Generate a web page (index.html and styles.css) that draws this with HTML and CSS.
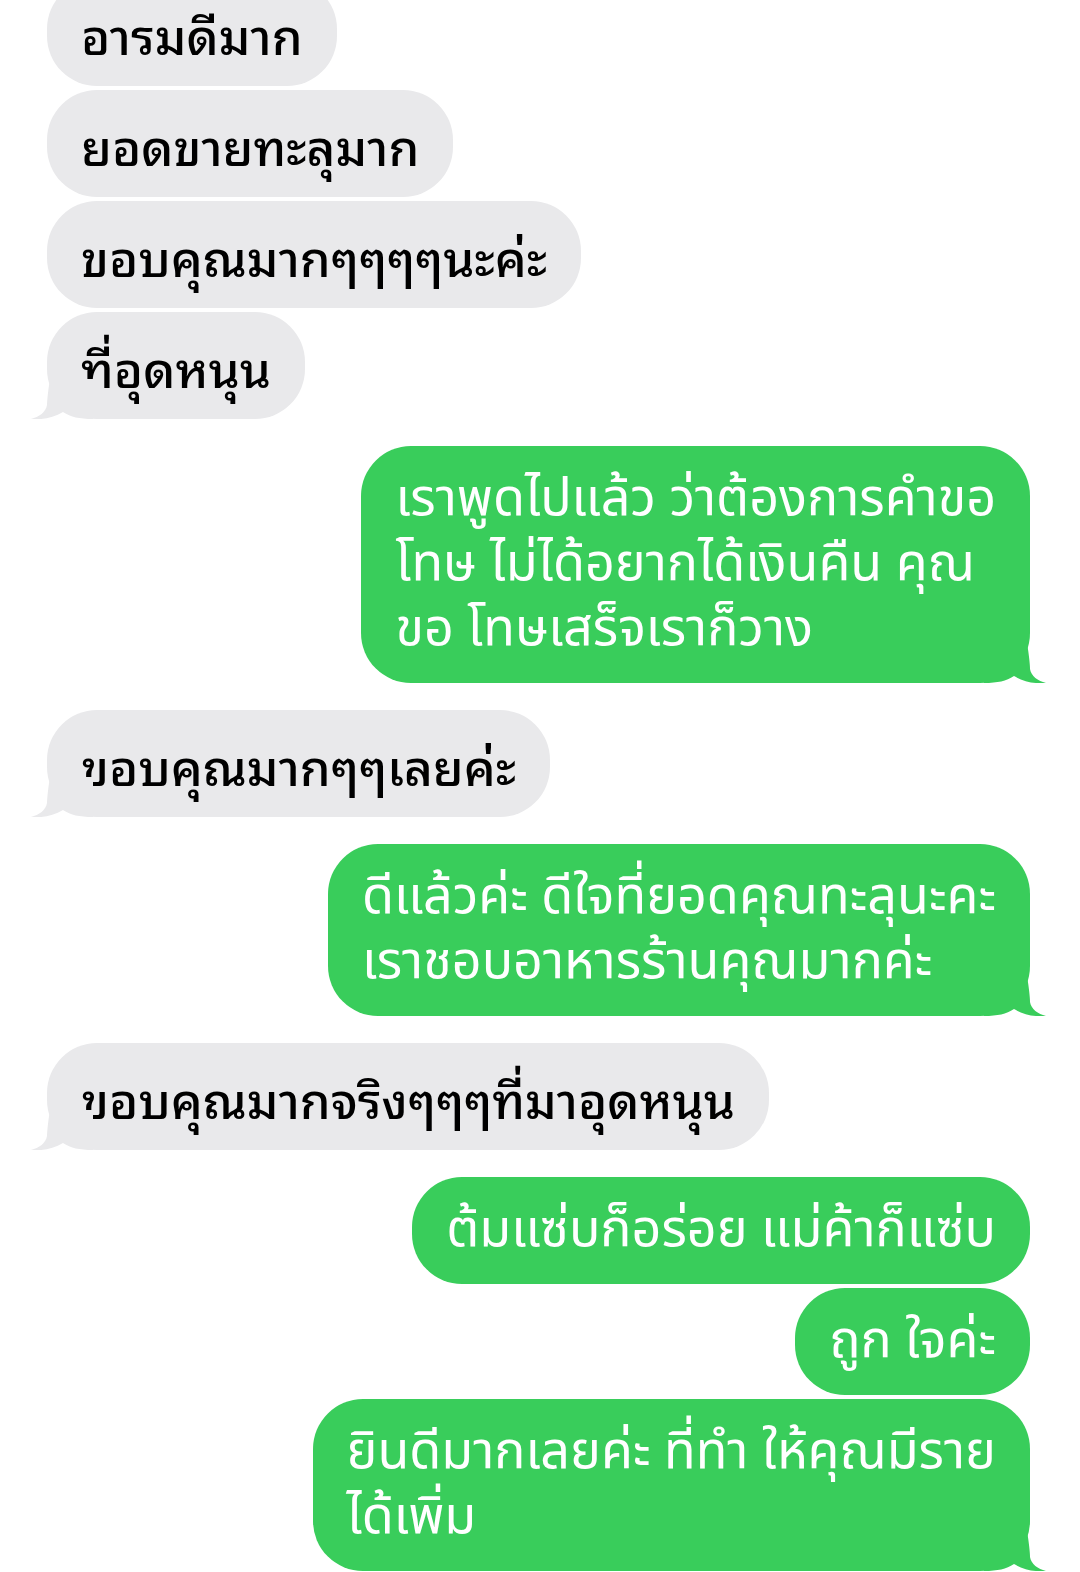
FILE: index.html
```html
<!DOCTYPE html>
<html lang="th">
<head>
	<meta charset="UTF-8">
	<title>Messages</title>
	<link rel="stylesheet" href="styles.css">
</head>
<body>
	<div class="thread">
		<div class="msg in">อารมดีมาก</div>
		<div class="msg in">ยอดขายทะลุมาก</div>
		<div class="msg in">ขอบคุณมากๆๆๆๆนะค่ะ</div>
		<div class="msg in tail">ที่อุดหนุน<svg class="tail-in" viewBox="0 0 80 40"><path d="M23 0 C21 12 20 22 20 26 C19 33 12 38 4 40 C14 41 26 39 36 33 C44 38 52 40 66 40 L66 0 Z"/></svg></div>

		<div class="msg out tail">เราพูดไปแล้ว ว่าต้องการคำขอ<br>โทษ ไม่ได้อยากได้เงินคืน คุณ<br>ขอ โทษเสร็จเราก็วาง<svg class="tail-out" viewBox="0 0 80 40"><path d="M23 0 C21 12 20 22 20 26 C19 33 12 38 4 40 C14 41 26 39 36 33 C44 38 52 40 66 40 L66 0 Z"/></svg></div>

		<div class="msg in tail">ขอบคุณมากๆๆเลยค่ะ<svg class="tail-in" viewBox="0 0 80 40"><path d="M23 0 C21 12 20 22 20 26 C19 33 12 38 4 40 C14 41 26 39 36 33 C44 38 52 40 66 40 L66 0 Z"/></svg></div>

		<div class="msg out tail">ดีแล้วค่ะ ดีใจที่ยอดคุณทะลุนะคะ<br>เราชอบอาหารร้านคุณมากค่ะ<svg class="tail-out" viewBox="0 0 80 40"><path d="M23 0 C21 12 20 22 20 26 C19 33 12 38 4 40 C14 41 26 39 36 33 C44 38 52 40 66 40 L66 0 Z"/></svg></div>

		<div class="msg in tail">ขอบคุณมากจริงๆๆๆที่มาอุดหนุน<svg class="tail-in" viewBox="0 0 80 40"><path d="M23 0 C21 12 20 22 20 26 C19 33 12 38 4 40 C14 41 26 39 36 33 C44 38 52 40 66 40 L66 0 Z"/></svg></div>

		<div class="msg out">ต้มแซ่บก็อร่อย แม่ค้าก็แซ่บ</div>
		<div class="msg out">ถูก ใจค่ะ</div>
		<div class="msg out tail">ยินดีมากเลยค่ะ ที่ทำ ให้คุณมีราย<br>ได้เพิ่ม<svg class="tail-out" viewBox="0 0 80 40"><path d="M23 0 C21 12 20 22 20 26 C19 33 12 38 4 40 C14 41 26 39 36 33 C44 38 52 40 66 40 L66 0 Z"/></svg></div>
	</div>
</body>
</html>
```

FILE: styles.css
```css
*{
	margin: 0;
	padding: 0;
}
html, body{
	background: #fff;
	overflow: hidden;
}
.thread{
	display: flex;
	flex-direction: column;
	gap: 4px;
	margin-top: -21px;
	padding: 0 50px 0 47px;
}
.msg{
	position: relative;
	padding: 21px 34px;
	border-radius: 50px;
	line-height: 65px;
	white-space: nowrap;
}
.msg.in{
	align-self: flex-start;
	background: #e9e9eb;
	color: #000;
	font-family: "Noto Sans Thai Looped", "Noto Sans Thai", "Noto Sans", sans-serif;
	font-size: 49.5px;
	font-weight: 500;
}
.msg.out{
	align-self: flex-end;
	background: #39cd5b;
	color: #fff;
	font-family: "Noto Sans Thai", "Noto Sans", sans-serif;
	font-size: 52px;
}
.msg.tail{
	margin-bottom: 23px;
}
.msg svg{
	position: absolute;
	bottom: 0;
	width: 80px;
	height: 40px;
}
.tail-in{
	left: -20px;
	fill: #e9e9eb;
}
.tail-out{
	right: -20px;
	fill: #39cd5b;
	transform: scaleX(-1);
}
```
